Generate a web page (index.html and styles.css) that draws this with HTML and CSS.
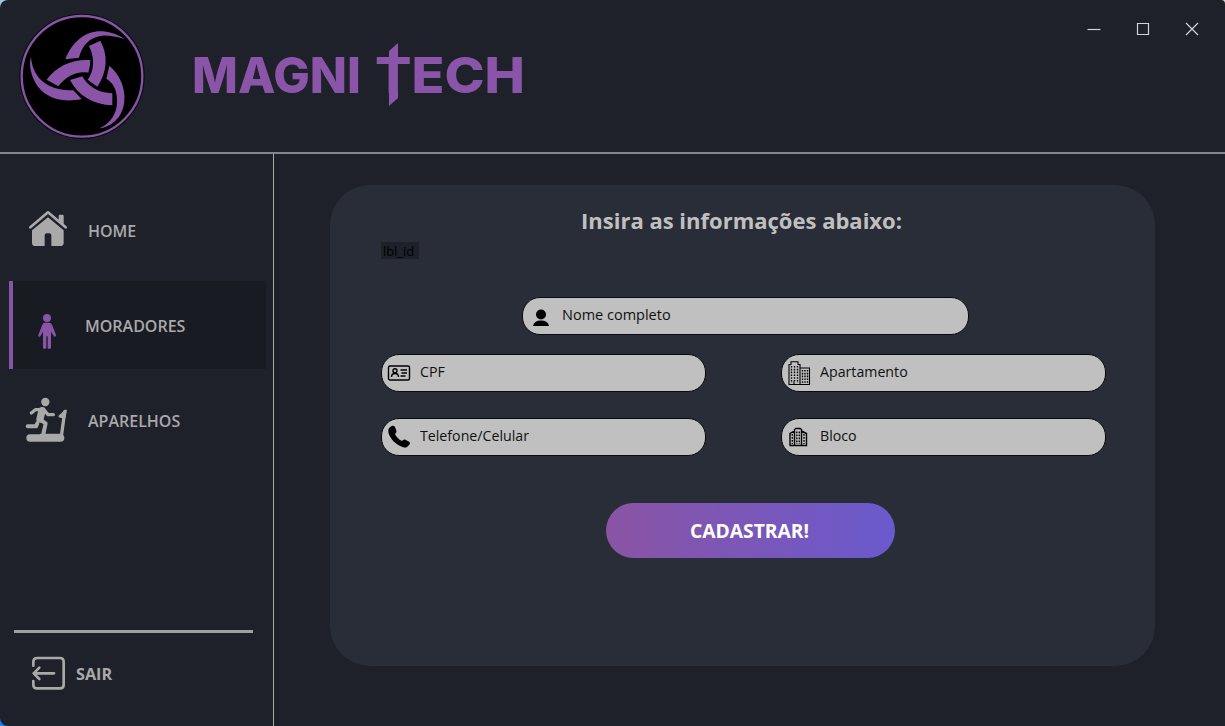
FILE: index.html
```html
<!DOCTYPE html>
<html lang="pt-BR">
<head>
<meta charset="utf-8">
<title>Magni Tech</title>
<link rel="stylesheet" href="styles.css">
</head>
<body>
<div class="window">
  <header class="header">
    <svg class="emblem" viewBox="57 39 378 378">
      <circle cx="246" cy="229" r="188" fill="#0a0a0e"/>
      <circle cx="246" cy="229" r="181" fill="#000" stroke="#8854a5" stroke-width="7"/>
      <g fill="#8a55a8">
        <path d="M196 178C218 120 262 90 310 94Q345 97 375 118Q335 105 305 107C268 112 245 138 237 173Z"/>
        <path d="M267 138L301 122C325 165 322 215 292 260L263 239C283 212 285 174 267 138Z"/>
        <path d="M140 239C170 198 215 177 271 180Q271 200 265 218C230 212 198 229 175 259Z"/>
        <path d="M93 170C97 230 138 272 220 271L245 297C180 311 128 290 105 246C91 217 87 193 93 170Z"/>
        <path d="M210 240L247 229C264 260 296 279 337 280V316C280 314 234 287 210 240Z"/>
        <path d="M328 197C361 226 376 264 373 302C370 347 341 378 299 385C335 366 351 339 351 305C352 272 341 249 319 236Z"/>
      </g>
    </svg>
    <svg class="wordmark" viewBox="0 0 340 80">
      <text x="0" y="56" textLength="169" lengthAdjust="spacingAndGlyphs">MAGNI</text>
      <text x="183" y="56" textLength="150" lengthAdjust="spacingAndGlyphs">TECH</text>
      <path d="M197 22V14L206 6V22ZM197 54H206V61L197 69Z"/>
    </svg>
    <div class="controls">
      <svg viewBox="0 0 14 14"><path d="M.5 7.500H13.500"/></svg>
      <svg viewBox="0 0 14 14"><path d="M1.500 1.500H12.500V12.500H1.500Z"/></svg>
      <svg viewBox="0 0 14 14"><path d="M1 1L13 13M13 1L1 13"/></svg>
    </div>
  </header>
  <div class="body">
    <nav class="sidebar">
      <a class="item">
        <svg class="icon-home" viewBox="84 90 120 111" fill="#a9a9a9">
          <path d="M91 142L144 97L197 142" fill="none" stroke="#a9a9a9" stroke-width="8" stroke-linecap="round" stroke-linejoin="round"/>
          <path d="M176 108Q176 104 180 104H187Q191 104 191 108V136L176 124Z"/>
          <path d="M144 112L191 151V188Q191 198 181 198H154V166Q154 160 148 160H140Q134 160 134 166V198H106Q96 198 96 188V151Z"/>
        </svg>
        <span>HOME</span>
      </a>
      <a class="item active">
        <svg class="icon-person" viewBox="110 399 60 111" fill="#8a55a8">
          <circle cx="140" cy="414" r="12"/>
          <path d="M133 428H147Q152 428 155 434L167 465Q168 470 162 470L152 455V505Q146 508 142 505V469H138V505Q134 508 128 505V455L119 470Q112 471 114 465L126 434Q128 428 133 428Z"/>
        </svg>
        <span>MORADORES</span>
      </a>
      <a class="item">
        <svg class="icon-gym" viewBox="75 651 129 138" fill="none" stroke="#a9a9a9" stroke-linecap="round" stroke-linejoin="round">
          <circle cx="136" cy="666" r="12.500" fill="#a9a9a9" stroke="none"/>
          <path d="M94 699L106 689H122" stroke-width="10"/>
          <path d="M126 692L120 717" stroke-width="22"/>
          <path d="M133 691L144 704H160" stroke-width="10"/>
          <path d="M119 718L137 730L130 762" stroke-width="12"/>
          <path d="M112 730L108 739H83" stroke-width="12"/>
          <path d="M185 762L194 696" stroke-width="10"/>
          <path d="M179 709L197 692L193 712Z" stroke-width="7" fill="#a9a9a9"/>
          <path d="M90 774H182" stroke-width="22"/>
          <path d="M122 764H185" stroke-width="6"/>
        </svg>
        <span>APARELHOS</span>
      </a>
      <div class="logout">
        <svg class="icon-exit" viewBox="93 168 105 105" fill="none" stroke="#a9a9a9" stroke-width="8" stroke-linecap="round" stroke-linejoin="round">
          <path d="M100 197V186Q100 174 112 174H180Q191 174 191 186V254Q191 265 180 265H112Q100 265 100 254V243M162 220H101M118 203L101 220L118 237"/>
        </svg>
        <span>SAIR</span>
      </div>
    </nav>
    <main class="main">
      <section class="card">
        <h1>Insira as informações abaixo:</h1>
        <div class="row-id"><span class="lbl-id">lbl_id</span></div>
        <label class="field name">
          <svg viewBox="0 0 24 24"><circle cx="12" cy="8.500" r="5"/><path d="M4 20Q5 14.500 12 14.500T20 20Z"/></svg>
          <span>Nome completo</span>
        </label>
        <div class="grid">
          <label class="field">
            <svg viewBox="0 0 24 24" fill="none" stroke="#000"><rect x="1.500" y="5" width="21" height="14" rx="1.500" stroke-width="1.400"/><circle cx="8" cy="9.700" r="2" stroke-width="1.400"/><path d="M4.500 16Q4.500 12.500 8 12.500T11.500 16M13.500 9H20M14.500 12H20M13.500 15H18.500" stroke-width="1.500"/></svg>
            <span>CPF</span>
          </label>
          <label class="field">
            <svg viewBox="0 0 24 24" fill="none" stroke="#000"><path d="M2 23.500V3.500H4V.8H11V3.500H13V23.500M13 7H22.500V23.500H1.500M7 23V20" stroke-width="1.100"/><path d="M4.500 5V22M7.500 5V20M10.500 5V22M15.500 9V22M18 9V22M20.500 9V22" stroke-width="1.400" stroke-dasharray="1.600 1.200"/></svg>
            <span>Apartamento</span>
          </label>
          <label class="field">
            <svg viewBox="0 0 24 24"><path d="M2 3L5 .8Q7 .3 8 2L9.500 6Q9.800 7.500 8 9Q10 13.500 15 16Q16.500 14 18 14.500L22.500 17Q23.700 18 22.500 19.500L20 22Q18.500 23 15.500 22C8 19 3.500 14 1.500 8Q.7 5 2 3Z"/></svg>
            <span>Telefone/Celular</span>
          </label>
          <label class="field">
            <svg viewBox="0 0 24 24" fill="none" stroke="#000"><path d="M3 20.500V8.500L7.500 6V20.500M7.500 6V4.500L9 3.500H13L14.500 4.500V20.500M14.500 6L19.500 8.500V20.500H2.500" stroke-width="1.400"/><path d="M5.300 9V19M9.800 6.500V19M12.300 6.500V19M17 9V19" stroke-width="1.400" stroke-dasharray="1.800 1.200"/></svg>
            <span>Bloco</span>
          </label>
        </div>
        <button class="submit">CADASTRAR!</button>
      </section>
    </main>
  </div>
</div>
</body>
</html>
```

FILE: styles.css
```css
* { box-sizing: border-box; }
body {
  margin: 0;
  width: 1225px;
  height: 726px;
  overflow: hidden;
  font-family: "Open Sans", "Noto Sans", sans-serif;
  background: linear-gradient(90deg, transparent 50%, #d8d8c8 50%) top / 100% 20px no-repeat,
    linear-gradient(#a5c4d4 50%, #0a84ff 50%);
}
.window {
  height: 726px;
  display: flex;
  flex-direction: column;
  background: #1e2129;
  border-radius: 8px 4px 0 8px;
}
.header {
  height: 154px;
  flex: none;
  display: flex;
  align-items: flex-start;
  padding: 13px 26px 0 19px;
  border-bottom: 2px solid #858689;
}
.emblem { width: 126px; height: 126px; }
.wordmark { width: 340px; height: 80px; margin: 24px 0 0 47px; fill: #8a55a8; }
.wordmark text { font: 800 50px Inter, sans-serif; }
.controls { display: flex; gap: 35px; margin: 9px 0 0 auto; }
.controls svg { width: 14px; height: 14px; fill: none; stroke: #d4d4d5; stroke-width: 1.2; }
.body { flex: 1; display: flex; min-height: 0; }
.sidebar {
  width: 274px;
  border-right: 1px solid #a9a9a9;
  padding: 32px 8px 0 9px;
  display: flex;
  flex-direction: column;
  gap: 7px;
  color: #a9a9a9;
}
.item {
  width: 257px;
  height: 88px;
  flex: none;
  display: flex;
  align-items: center;
  border-left: 4px solid transparent;
  font-size: 16px;
  font-weight: 600;
}
.item span { padding-top: 2px; }
.item.active { border-left-color: #8854a5; background: #191b23; }
.icon-home { width: 40px; height: 37px; margin: 0 20px 3px 15px; }
.icon-person { width: 20px; height: 37px; margin: 13px 28px 0 24px; }
.icon-gym { width: 43px; height: 46px; margin: 0 20px 0 12px; }
.logout {
  width: 239px;
  margin: auto 0 35px 5px;
  padding: 23px 0 0 17px;
  border-top: 3px solid #a0a0a0;
  display: flex;
  align-items: center;
  gap: 10px;
  font-size: 16.2px;
  font-weight: 700;
}
.icon-exit { width: 35px; height: 35px; }
.main { flex: 1; padding: 31px 0 0 56px; }
.card {
  width: 825px;
  height: 481px;
  padding: 17px 49px 0 51px;
  border-radius: 40px;
  background: #292d37;
}
h1 {
  margin: 0 4px 0 0;
  height: 37px;
  line-height: 36px;
  text-align: center;
  font-size: 22px;
  font-weight: 700;
  color: #c0c0c0;
}
.row-id { height: 58px; padding-top: 3px; }
.lbl-id {
  display: block;
  width: 38px;
  height: 17px;
  padding-left: 2px;
  line-height: 18px;
  font-size: 12.8px;
  color: #000;
  background: #1e2129;
}
.field {
  width: 325px;
  height: 38px;
  display: flex;
  align-items: center;
  gap: 9px;
  padding-left: 5px;
  border: 1px solid #0a0a0c;
  border-radius: 18px;
  background: #c0c0c0;
  font-size: 14.2px;
  color: #101010;
}
.field svg { width: 24px; height: 24px; }
.field span { padding-bottom: 4px; }
.field.name { width: 447px; margin-left: 141px; padding-left: 6px; font-size: 14.5px; }
.field.name svg { margin-top: 4px; }
.grid { display: grid; grid-template-columns: 325px 325px; gap: 26px 75px; margin-top: 19px; }
.submit {
  display: block;
  width: 289px;
  height: 55px;
  margin: 47px 0 0 225px;
  padding: 0 2px 0 0;
  border: 0;
  border-radius: 28px;
  background: linear-gradient(90deg, #8a54a4, #6a5acd);
  color: #fff;
  font: 700 19.3px "Open Sans", "Noto Sans", sans-serif;
}
```
